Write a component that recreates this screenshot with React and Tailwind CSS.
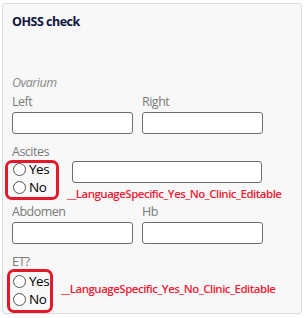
const font = { fontFamily: '"Segoe UI", "Open Sans", "Noto Sans", sans-serif' }

function Field({ label }) {
  return (
    <div className="flex flex-col">
      <span className="text-[12.5px] leading-[16px] tracking-[-0.5px] text-[#7a7a7a]">{label}</span>
      <input className="mt-[2px] h-[22px] w-[121px] rounded-[3px] border border-[#6e6e6e] bg-white" />
    </div>
  )
}

function Radio({ label }) {
  return (
    <label className="flex h-[13px] items-center gap-[3px] text-[13.5px] leading-[13px] tracking-[-0.5px] text-black">
      <span className="inline-block h-[13px] w-[13px] shrink-0 rounded-full border border-[#555] bg-white" />
      {label}
    </label>
  )
}

function YesNo({ className }) {
  return (
    <div className={`flex shrink-0 flex-col gap-[5px] rounded-[7px] border-[3px] border-[#e2182b] ${className}`}>
      <Radio label="Yes" />
      <Radio label="No" />
    </div>
  )
}

const warn = 'text-[11.5px] font-semibold leading-[14px] tracking-[-0.5px] text-[#ef1d35]'

export default function App() {
  return (
    <div className="h-[318px] w-[306px] bg-white pl-[2px] pt-[3px]" style={font}>
      <div className="h-[311px] w-[300px] rounded-[3px] border border-[#dcdcdc] bg-[#f8f8f8] pl-[9px] pt-[10px]">
        <h2 className="text-[12.5px] font-bold leading-[16px] tracking-[-0.5px] text-[#0d1540]">OHSS check</h2>

        <p className="mt-[45px] text-[12.5px] italic leading-[16px] tracking-[-0.5px] text-[#8a8a8a]">Ovarium</p>
        <div className="mt-[3px] flex gap-[9px]">
          <Field label="Left" />
          <Field label="Right" />
        </div>

        <p className="mt-[10px] text-[12.5px] leading-[16px] tracking-[-0.5px] text-[#7a7a7a]">Ascites</p>
        <div className="-ml-[7px] flex gap-[13px]">
          <YesNo className="h-[40px] w-[54px] pl-[5px] pt-0" />
          <div className="flex flex-col pt-[1px]">
            <input className="h-[22px] w-[190px] rounded-[3px] border border-[#6e6e6e] bg-white" />
            <span className={`-ml-[5px] mt-[4px] ${warn}`}>__LanguageSpecific_Yes_No_Clinic_Editable</span>
          </div>
        </div>

        <div className="mt-[3px] flex gap-[9px]">
          <Field label="Abdomen" />
          <Field label="Hb" />
        </div>

        <p className="mt-[10px] text-[12.5px] leading-[16px] tracking-[-0.5px] text-[#7a7a7a]">ET?</p>
        <div className="-ml-[5px] -mt-[1px] flex items-center gap-[8px]">
          <YesNo className="h-[44px] w-[46px] pl-[3px] pt-[3px]" />
          <span className={`-mt-[5px] ${warn}`}>__LanguageSpecific_Yes_No_Clinic_Editable</span>
        </div>
      </div>
    </div>
  )
}
